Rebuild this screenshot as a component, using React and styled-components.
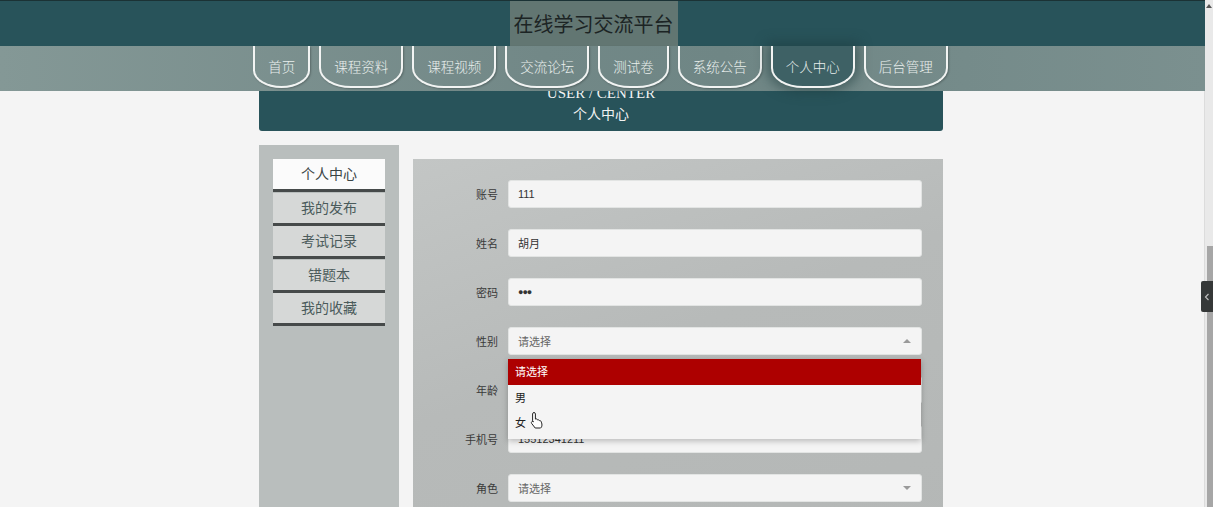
import React from 'react';
import styled, { createGlobalStyle, css } from 'styled-components';

const GlobalStyle = createGlobalStyle`
  html, body {
    margin: 0;
    padding: 0;
    height: 100%;
    overflow: hidden;
    background: #f4f4f4;
    font-family: "Noto Sans CJK SC", "Noto Sans", sans-serif;
  }
  #root { height: 100%; }
`;

const Shell = styled.div`
  display: flex;
  height: 100vh;
`;

const Page = styled.div`
  flex: 1;
  position: relative;
  overflow: hidden;
  background: #f4f4f4;
`;

const ScrollTrack = styled.div`
  width: 8px;
  background: #e9e9e9;
  border-left: 1px solid #dcdcdc;
  display: flex;
  flex-direction: column;
  align-items: flex-end;
`;

const ScrollArrow = styled.div`
  width: 0;
  height: 0;
  margin: 4px 1px 0 0;
  border-left: 3px solid transparent;
  border-right: 3px solid transparent;
  border-bottom: 4px solid #555;
`;

const ScrollThumb = styled.div`
  margin-top: 238px;
  width: 6px;
  flex: 1;
  background: #a6a6a6;
`;

const Header = styled.header`
  position: fixed;
  top: 0;
  left: 0;
  right: 8px;
  z-index: 10;
`;

const TopBar = styled.div`
  height: 45px;
  border-top: 1px solid #1b3235;
  background: #28535a;
  display: flex;
  justify-content: center;
`;

const Title = styled.div`
  margin-left: -18px;
  padding: 0 4px;
  background: #627672;
  color: #1c2424;
  font-size: 20px;
  line-height: 45px;
`;

const NavBar = styled.nav`
  height: 45px;
  background: linear-gradient(90deg, #849896 0%, #728887 45%, #6f8685 60%, #7b908f 100%);
  display: flex;
  justify-content: center;
  gap: 9px;
  padding-right: 4px;
`;

const Tab = styled.div`
  height: 40px;
  padding: 0 13px;
  display: flex;
  align-items: center;
  color: #e9efed;
  font-size: 13.5px;
  font-weight: 300;
  border: 2px solid #f2f4f3;
  border-top: none;
  border-radius: 0 0 32px 32px / 0 0 20px 20px;
  box-shadow: 1px 1px 2px rgba(0, 0, 0, 0.25);
  ${(p) =>
    p.$active &&
    css`
      background: #3e6165;
      box-shadow: 0 0 12px 4px rgba(30, 60, 62, 0.55);
    `}
`;

const Main = styled.main`
  width: 684px;
  margin: 0 auto;
  padding-top: 78px;
  transform: translateX(-1px);
`;

const Banner = styled.div`
  background: #28535a;
  border-radius: 0 0 3px 3px;
  padding: 6px 0 7px;
  text-align: center;
  color: #f2f2f2;
`;

const BannerEn = styled.div`
  font-family: "Liberation Serif", serif;
  font-size: 15px;
  line-height: 18px;
`;

const BannerCn = styled.div`
  font-size: 14px;
  line-height: 22px;
`;

const Body = styled.div`
  display: flex;
  gap: 14px;
  margin-top: 14px;
  align-items: flex-start;
`;

const Sidebar = styled.aside`
  width: 112px;
  height: 400px;
  padding: 14px;
  background: #b9bebd;
  display: flex;
  flex-direction: column;
`;

const MenuItem = styled.div`
  height: 30px;
  line-height: 28px;
  text-align: center;
  font-size: 14px;
  color: ${(p) => (p.$active ? '#3a4444' : '#4b5b5b')};
  background: ${(p) => (p.$active ? '#fbfbfb' : '#d6d8d7')};
  border-bottom: 3px solid #464a4a;
  margin-bottom: 0.5px;
`;

const FormPanel = styled.section`
  position: relative;
  width: 530px;
  margin-top: 14px;
  height: 400px;
  padding-top: 21px;
  box-sizing: border-box;
  background: linear-gradient(160deg, #c3c6c5 0%, #b7bab9 45%, #b4b7b6 100%);
  display: flex;
  flex-direction: column;
  gap: 21px;
`;

const Row = styled.div`
  position: relative;
  display: flex;
  align-items: center;
  gap: 10px;
`;

const Label = styled.label`
  width: 85px;
  text-align: right;
  font-size: 11px;
  color: #3a3a3a;
`;

const Field = styled.div`
  width: 414px;
  height: 28px;
  box-sizing: border-box;
  padding: 0 9px;
  border-radius: 3px;
  background: #f4f4f4;
  border: 1px solid #e2e4e3;
  display: flex;
  align-items: center;
  justify-content: space-between;
  font-family: "Liberation Sans", "Noto Sans CJK SC", sans-serif;
  font-size: 11px;
  color: ${(p) => (p.$placeholder ? '#666' : '#333')};
`;

const Dots = styled.span`
  font-size: 9px;
  letter-spacing: -1px;
  color: #333;
`;

const Caret = styled.span`
  width: 0;
  height: 0;
  margin-right: 1px;
  border-left: 4px solid transparent;
  border-right: 4px solid transparent;
  ${(p) =>
    p.$up
      ? css`border-bottom: 4px solid #9a9a9a;`
      : css`border-top: 4px solid #9a9a9a;`}
`;

const Dropdown = styled.ul`
  position: absolute;
  left: 95px;
  top: 32px;
  width: 413px;
  margin: 0;
  padding: 0 0 3px;
  list-style: none;
  background: #f4f4f4;
  box-shadow: 0 2px 6px rgba(0, 0, 0, 0.25);
  z-index: 5;
`;

const Option = styled.li`
  height: 25.5px;
  line-height: 25.5px;
  padding-left: 7px;
  font-size: 11px;
  color: ${(p) => (p.$selected ? '#fff' : '#222')};
  background: ${(p) => (p.$selected ? '#ad0000' : 'transparent')};
`;

const Pointer = styled.svg`
  position: absolute;
  left: 22px;
  top: 52px;
`;

const SideTab = styled.div`
  position: fixed;
  right: 0;
  top: 281px;
  width: 12px;
  height: 31px;
  background: #353838;
  border-radius: 2px 0 0 2px;
  display: flex;
  align-items: center;
  justify-content: center;
  z-index: 20;
`;

const tabs = ['首页', '课程资料', '课程视频', '交流论坛', '测试卷', '系统公告', '个人中心', '后台管理'];
const menu = ['个人中心', '我的发布', '考试记录', '错题本', '我的收藏'];

export default function App() {
  return (
    <>
      <GlobalStyle />
      <Shell>
        <Page>
          <Header>
            <TopBar>
              <Title>在线学习交流平台</Title>
            </TopBar>
            <NavBar>
              {tabs.map((t) => (
                <Tab key={t} $active={t === '个人中心'}>
                  {t}
                </Tab>
              ))}
            </NavBar>
          </Header>

          <Main>
            <Banner>
              <BannerEn>USER / CENTER</BannerEn>
              <BannerCn>个人中心</BannerCn>
            </Banner>
            <Body>
              <Sidebar>
                {menu.map((m, i) => (
                  <MenuItem key={m} $active={i === 0}>
                    {m}
                  </MenuItem>
                ))}
              </Sidebar>
              <FormPanel>
                <Row>
                  <Label>账号</Label>
                  <Field>111</Field>
                </Row>
                <Row>
                  <Label>姓名</Label>
                  <Field>胡月</Field>
                </Row>
                <Row>
                  <Label>密码</Label>
                  <Field>
                    <Dots>●●●</Dots>
                  </Field>
                </Row>
                <Row>
                  <Label>性别</Label>
                  <Field $placeholder>
                    请选择
                    <Caret $up />
                  </Field>
                  <Dropdown>
                    <Option $selected>请选择</Option>
                    <Option>男</Option>
                    <Option>女</Option>
                    <Pointer width="14" height="18" viewBox="0 0 14 18">
                      <path
                        d="M4 1.5c.8 0 1.4.6 1.4 1.4v5.2l.4-.1c.6-.3 1.4 0 1.6.6l.2.4c.6-.4 1.4-.2 1.7.4l.1.3c.6-.3 1.4 0 1.6.6l.6 1.6c.5 1.4.5 3-.2 4.3L10.6 17H5.2L1.6 12.4c-.4-.6-.3-1.4.3-1.8.5-.3 1.2-.2 1.6.2l-.9-.9V2.9c0-.8.6-1.4 1.4-1.4z"
                        fill="#fff"
                        stroke="#222"
                        strokeWidth="1"
                        strokeLinejoin="round"
                      />
                    </Pointer>
                  </Dropdown>
                </Row>
                <Row>
                  <Label>年龄</Label>
                  <Field />
                </Row>
                <Row>
                  <Label>手机号</Label>
                  <Field>15512341211</Field>
                </Row>
                <Row>
                  <Label>角色</Label>
                  <Field $placeholder>
                    请选择
                    <Caret />
                  </Field>
                </Row>
              </FormPanel>
            </Body>
          </Main>
          <SideTab>
            <svg width="6" height="8" viewBox="0 0 6 8">
              <path d="M4.5 1 1.5 4l3 3" fill="none" stroke="#bdbdbd" strokeWidth="1.2" />
            </svg>
          </SideTab>
        </Page>
        <ScrollTrack>
          <ScrollArrow />
          <ScrollThumb />
        </ScrollTrack>
      </Shell>
    </>
  );
}
